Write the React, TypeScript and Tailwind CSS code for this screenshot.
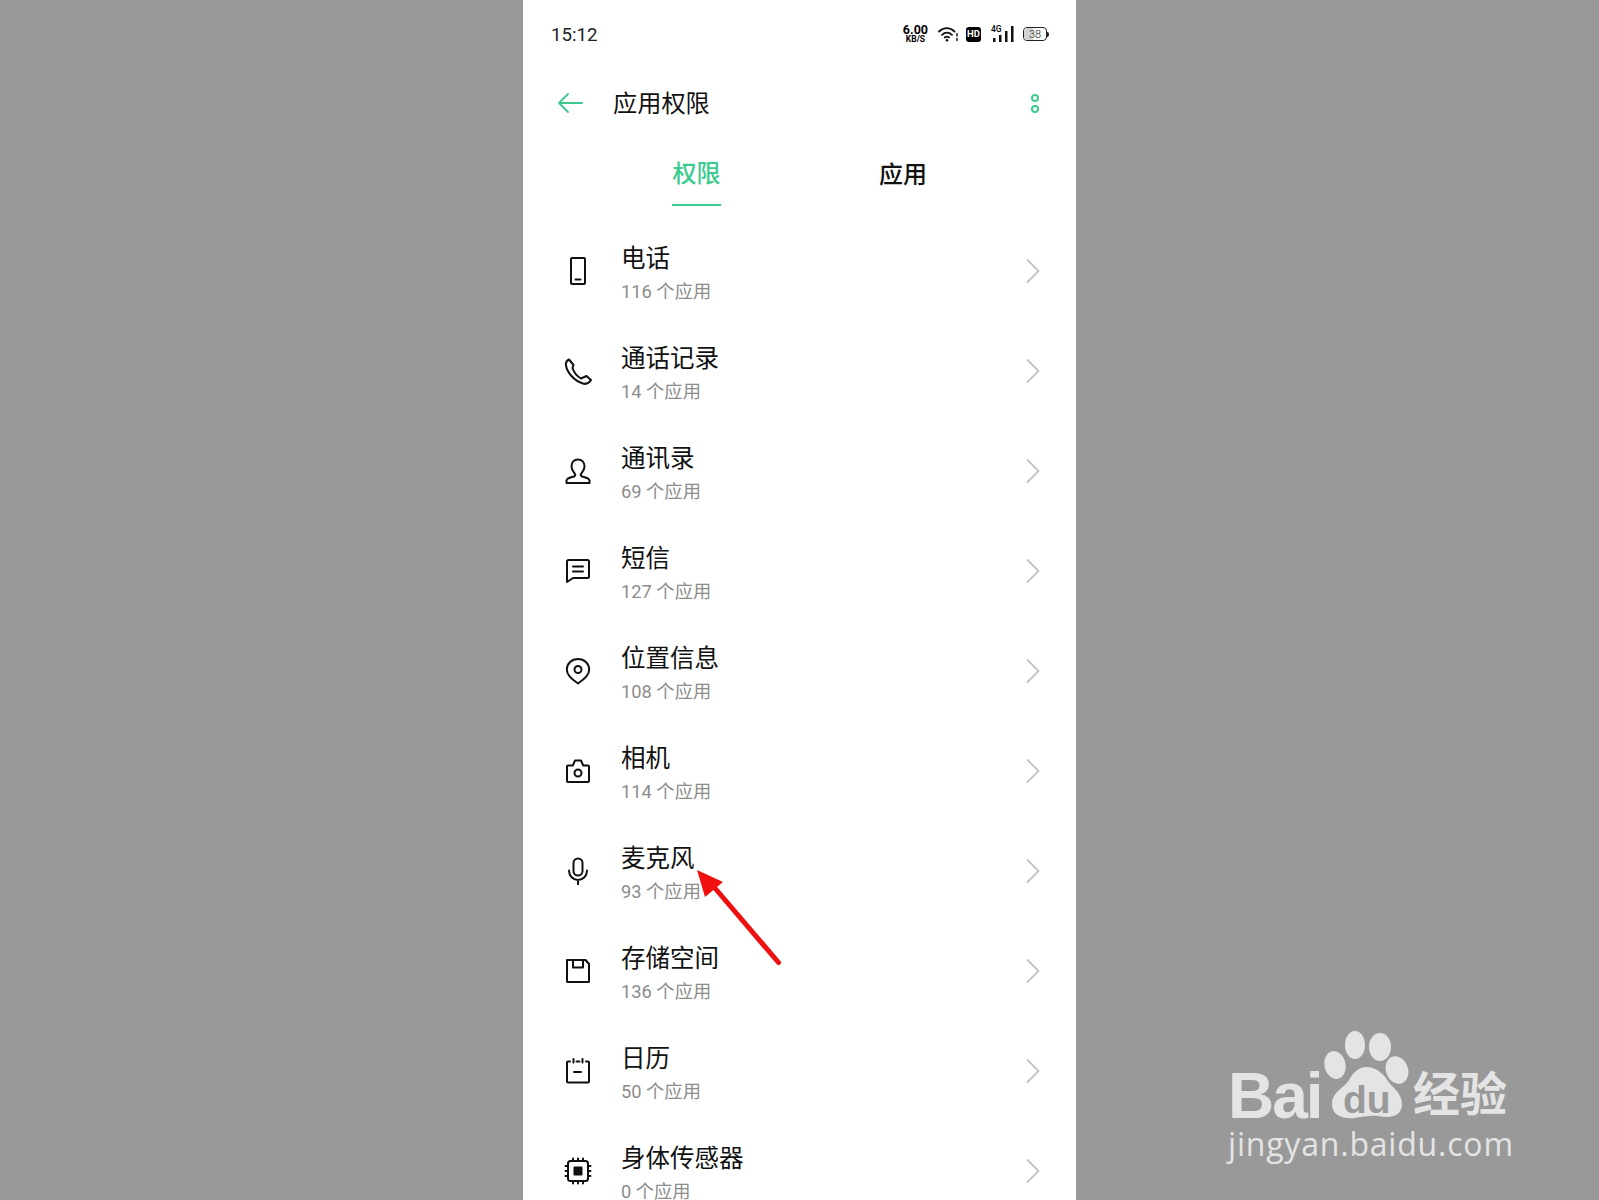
import * as React from "react"
import { ChevronRight } from "lucide-react"

const stroke = {
  fill: "none",
  stroke: "#111",
  strokeWidth: 2,
  strokeLinecap: "round" as const,
  strokeLinejoin: "round" as const,
}

const icons: Record<string, React.ReactNode> = {
  device: (
    <>
      <rect x="7" y="1" width="14" height="26" rx="1" />
      <path d="M11.5 22.5h5" />
    </>
  ),
  phone: (
    <path d="M5 2.500C3 3.500 1.500 6 2 8.500 3 15 10 24 19 26.500c3 1 6-.5 8-3.500l-4.500-4-5.500 2.500C13.500 19.500 10 15.500 8.500 11l1-3Z" />
  ),
  contact: (
    <path d="M14 2.500c-4 0-6.500 3-6.500 7 0 3.500 2 5.500 3.500 7.500.5 1 0 2-1 2.500-3 1-7 1.500-7.500 4V26h23v-2.500c-.5-2.500-4.500-3-7.500-4-1-.5-1.500-1.500-1-2.500 1.500-2 3.500-4 3.500-7.500 0-4-2.500-7-6.500-7Z" />
  ),
  message: (
    <>
      <path d="M3 4.500c0-.8.600-1.500 1.500-1.500h19c.8 0 1.500.7 1.500 1.500v15c0 .8-.7 1.500-1.500 1.500H9l-6 4Z" />
      <path d="M9 9.500h10M9 14.500h10" />
    </>
  ),
  location: (
    <>
      <path d="M14 26.500C8 22.500 2.800 18.500 2.800 12.800 2.800 6.500 7.800 2 14 2s11.200 4.500 11.200 10.800c0 5.700-5.200 9.700-11.200 13.700Z" />
      <circle cx="14" cy="12.500" r="3.500" />
    </>
  ),
  camera: (
    <>
      <path d="M3 9.500c0-.6.500-1 1-1h4.800L11 3.500h6l2.200 5H24c.5 0 1 .4 1 1v14.500c0 .6-.5 1-1 1H4c-.5 0-1-.4-1-1Z" />
      <circle cx="14" cy="16" r="3.500" />
    </>
  ),
  mic: (
    <>
      <rect x="9.500" y="1.500" width="9" height="17" rx="4.500" />
      <path d="M5 13.500c0 5.500 4 9.500 9 9.500s9-4 9-9.500M14 23v5" />
    </>
  ),
  save: (
    <>
      <path d="M3 3h18.500L25 7v17.500c0 .3-.2.500-.5.500h-21c-.3 0-.5-.2-.5-.5Z" />
      <path d="M9 3v7.500h10V3" />
    </>
  ),
  calendar: (
    <>
      <path d="M6 4.500H4c-.6 0-1 .4-1 1v19c0 .6.400 1 1 1h20c.6 0 1-.4 1-1v-19c0-.6-.4-1-1-1h-2" />
      <path d="M12.500 4.500h3M9.500 2v3.500M18.500 2v3.500M10 15h7" />
    </>
  ),
  chip: (
    <>
      <rect x="4" y="4" width="20" height="20" rx="2.500" />
      <rect x="10.500" y="10.500" width="7" height="7" fill="#111" />
      <path d="M9 1.500v2.500M14 1.500v2.500M19 1.500v2.500M9 24v2.500M14 24v2.500M19 24v2.500M1.500 9H4M1.500 14H4M1.500 19H4M24 9h2.500M24 14h2.500M24 19h2.500" />
    </>
  ),
}

const rows = [
  { icon: "device", title: "电话", sub: "116 个应用" },
  { icon: "phone", title: "通话记录", sub: "14 个应用" },
  { icon: "contact", title: "通讯录", sub: "69 个应用" },
  { icon: "message", title: "短信", sub: "127 个应用" },
  { icon: "location", title: "位置信息", sub: "108 个应用" },
  { icon: "camera", title: "相机", sub: "114 个应用" },
  { icon: "mic", title: "麦克风", sub: "93 个应用" },
  { icon: "save", title: "存储空间", sub: "136 个应用" },
  { icon: "calendar", title: "日历", sub: "50 个应用" },
  { icon: "chip", title: "身体传感器", sub: "0 个应用" },
]

function StatusIcons() {
  return (
    <div className="flex items-center text-black">
      <div className="flex flex-col items-center font-['Roboto',sans-serif] font-bold leading-none">
        <span className="text-[12.500px] leading-[11px]">6.00</span>
        <span className="text-[8.500px] leading-[9px]">KB/S</span>
      </div>
      {/* wifi */}
      <svg className="ml-[10px]" width="21" height="16" viewBox="0 0 21 16" fill="none" stroke="#111" strokeWidth="1.800" strokeLinecap="round">
        <path d="M1 5.500C5.500 1 12 1 16.500 5.500M4 8.800c3-2.800 7-2.800 10 0M6.800 11.500c1.300-1.100 2.900-1.100 4.200 0" />
        <circle cx="9" cy="14.300" r="1.300" fill="#111" stroke="none" />
        <path d="M19 7.500v2.500M19 12.500v2" strokeWidth="1.400" />
      </svg>
      <div className="ml-[7px] flex h-[15px] w-[15px] items-center justify-center rounded-[3px] bg-black font-['Roboto',sans-serif] text-[9.500px] font-bold leading-none text-white">
        HD
      </div>
      {/* 4G signal */}
      <div className="relative ml-[10px] h-[16px] w-[23px]">
        <span className="absolute left-0 top-[-2px] font-['Roboto',sans-serif] text-[8.500px] font-medium leading-[10px]">4G</span>
        <svg className="absolute left-0 top-0" width="23" height="16" viewBox="0 0 23 16" fill="#111">
          <rect x="2" y="12" width="2.500" height="4" />
          <rect x="8" y="9" width="2.500" height="7" />
          <rect x="14" y="5" width="2.500" height="11" />
          <rect x="20" y="0" width="2.500" height="16" />
        </svg>
      </div>
      {/* battery */}
      <div className="ml-[9px] flex items-center">
        <div className="relative flex h-[14px] w-[24px] items-center justify-center overflow-hidden rounded-[4px] border border-[#222] font-['Roboto',sans-serif] text-[11px] font-light leading-none text-[#222]">
          <div className="absolute inset-y-0 left-0 w-[9px] bg-[#d4d4d4]" />
          <span className="relative">38</span>
        </div>
        <div className="h-[5px] w-[2px] rounded-r-[2px] bg-[#222]" />
      </div>
    </div>
  )
}

function PermissionRow({ icon, title, sub }: { icon: string; title: string; sub: string }) {
  return (
    <div className="flex h-[100px] shrink-0 items-center pl-[41px] pr-[21px]">
      <svg className="shrink-0" width="28" height="28" viewBox="0 0 28 28" {...stroke}>
        {icons[icon]}
      </svg>
      <div className="ml-[29px] flex-1 pt-[8px]">
        <div className="text-[24.500px] leading-[34px] text-[#111]">{title}</div>
        <div className="text-[18.300px] leading-[32px] text-[#8c8c8c]">{sub}</div>
      </div>
      <ChevronRight className="h-[44px] w-[44px] text-[#c4c4c4]" strokeWidth={1} />
    </div>
  )
}

function Watermark() {
  return (
    <div className="absolute left-[1228px] top-[1028px] h-[140px] w-[290px] text-[#e4e4e4]">
      <svg className="absolute left-[92px] top-0" width="100" height="95" viewBox="0 0 100 95" fill="#e4e4e4">
        <ellipse cx="15" cy="37" rx="10.500" ry="14" transform="rotate(-12 15 37)" />
        <ellipse cx="35" cy="17" rx="10" ry="14" />
        <ellipse cx="60" cy="19" rx="11" ry="14" />
        <ellipse cx="77" cy="42" rx="11" ry="14" transform="rotate(-20 77 42)" />
        <path d="M47 39C38 39 33 45 29 52 24 60 12 64 12 76 12 88 24 91 34 90 42 89 50 87 58 88 68 90 82 90 82 76 82 64 70 58 66 50 61 44 55 39 47 39Z" />
      </svg>
      <span className="absolute left-[115px] top-[52px] font-['Liberation_Sans',sans-serif] text-[39px] font-bold leading-[40px] text-[#999]">
        du
      </span>
      <span className="absolute left-0 top-[45px] font-['Liberation_Sans',sans-serif] text-[64px] font-bold leading-[46px] tracking-[-2px]">
        Bai
      </span>
      <span className="absolute left-[185px] top-[42px] whitespace-nowrap text-[47px] font-bold leading-[50px]">经验</span>
      <span className="absolute left-0 top-[94px] whitespace-nowrap font-['Open_Sans',sans-serif] text-[32px] leading-[44px] tracking-[.8px]">
        jingyan.baidu.com
      </span>
    </div>
  )
}

export default function App() {
  return (
    <div className="relative flex h-[1200px] justify-center overflow-hidden bg-[#999999] font-['Roboto','Noto_Sans_CJK_SC',sans-serif]">
      <div className="flex w-[553px] flex-col overflow-hidden bg-white">
        {/* Status bar */}
        <div className="flex h-[68px] shrink-0 items-center justify-between pl-[28px] pr-[27px]">
          <span className="pt-[2px] text-[18.700px] text-[#222]">15:12</span>
          <StatusIcons />
        </div>

        {/* Title bar */}
        <div className="flex h-[70px] shrink-0 items-center pl-[35px] pr-[37px]">
          <svg width="25" height="20" viewBox="0 0 25 20" fill="none" stroke="#3ccb8f" strokeWidth="1.800" strokeLinecap="round" strokeLinejoin="round">
            <path d="M1 10h23M10 1l-9 9 9 9" />
          </svg>
          <span className="ml-[30px] flex-1 pt-[2px] text-[24.200px] text-[#111]">应用权限</span>
          <div className="flex flex-col gap-[3px]">
            <span className="h-[8px] w-[8px] rounded-full border-2 border-[#3ccb8f]" />
            <span className="h-[8px] w-[8px] rounded-full border-2 border-[#3ccb8f]" />
          </div>
        </div>

        {/* Tabs */}
        <div className="flex h-[83px] shrink-0 pl-[149px]">
          <div className="flex h-[68px] w-[49px] items-center justify-center border-b-2 border-[#3ccb8f] pt-[5px] text-[24px] font-medium text-[#3ccb8f]">
            权限
          </div>
          <div className="ml-[158px] flex h-[68px] items-center pt-[5px] text-[24px] font-medium text-[#111]">应用</div>
        </div>

        {/* Permission list */}
        <div className="flex flex-col">
          {rows.map((r) => (
            <PermissionRow key={r.title} icon={r.icon} title={r.title} sub={r.sub} />
          ))}
        </div>
      </div>

      {/* Red annotation arrow */}
      <svg className="absolute left-[690px] top-[860px]" width="100" height="110" viewBox="0 0 100 110">
        <path d="M88.500 102.500 24 27" stroke="#f01010" strokeWidth="5" strokeLinecap="round" />
        <path d="M7 10 33 22 15 37Z" fill="#f01010" />
      </svg>

      <Watermark />
    </div>
  )
}
